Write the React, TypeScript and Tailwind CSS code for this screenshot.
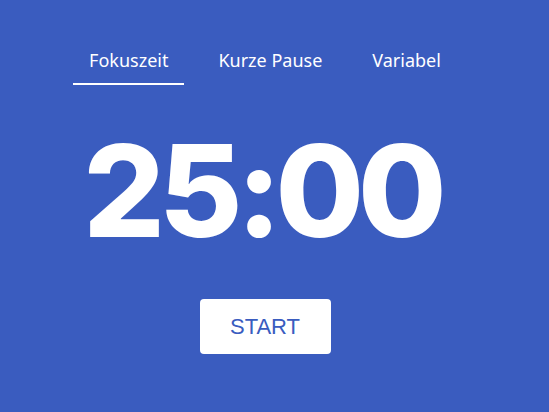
import React from "react";

export default function App() {
  return (
    <div className="w-[549px] h-[412px] bg-[#3a5cbf] overflow-hidden">
      <div className="w-[530px] flex flex-col items-center pt-[48px]">
        <div className="flex gap-[18px] text-white text-[18px] leading-[24px]" style={{ fontFamily: '"Noto Sans", sans-serif' }}>
          <div className="px-[16px] pb-[11px] border-b-2 border-white">Fokuszeit</div>
          <div className="px-[16px] pb-[11px] border-b-2 border-transparent">Kurze Pause</div>
          <div className="px-[16px] pb-[11px] border-b-2 border-transparent">Variabel</div>
        </div>
        <div
          className="mt-[31px] text-white text-[128px] font-extrabold leading-[150px] tracking-[-6px] pr-[6px]"
          style={{ fontFamily: 'Inter, sans-serif' }}
        >
          25:00
        </div>
        <button
          className="mt-[33px] w-[131px] h-[55px] bg-white rounded-[4px] text-[#3a5cbf] text-[22px]"
          style={{ fontFamily: '"Liberation Sans", Arial, sans-serif' }}
        >
          START
        </button>
      </div>
    </div>
  );
}
